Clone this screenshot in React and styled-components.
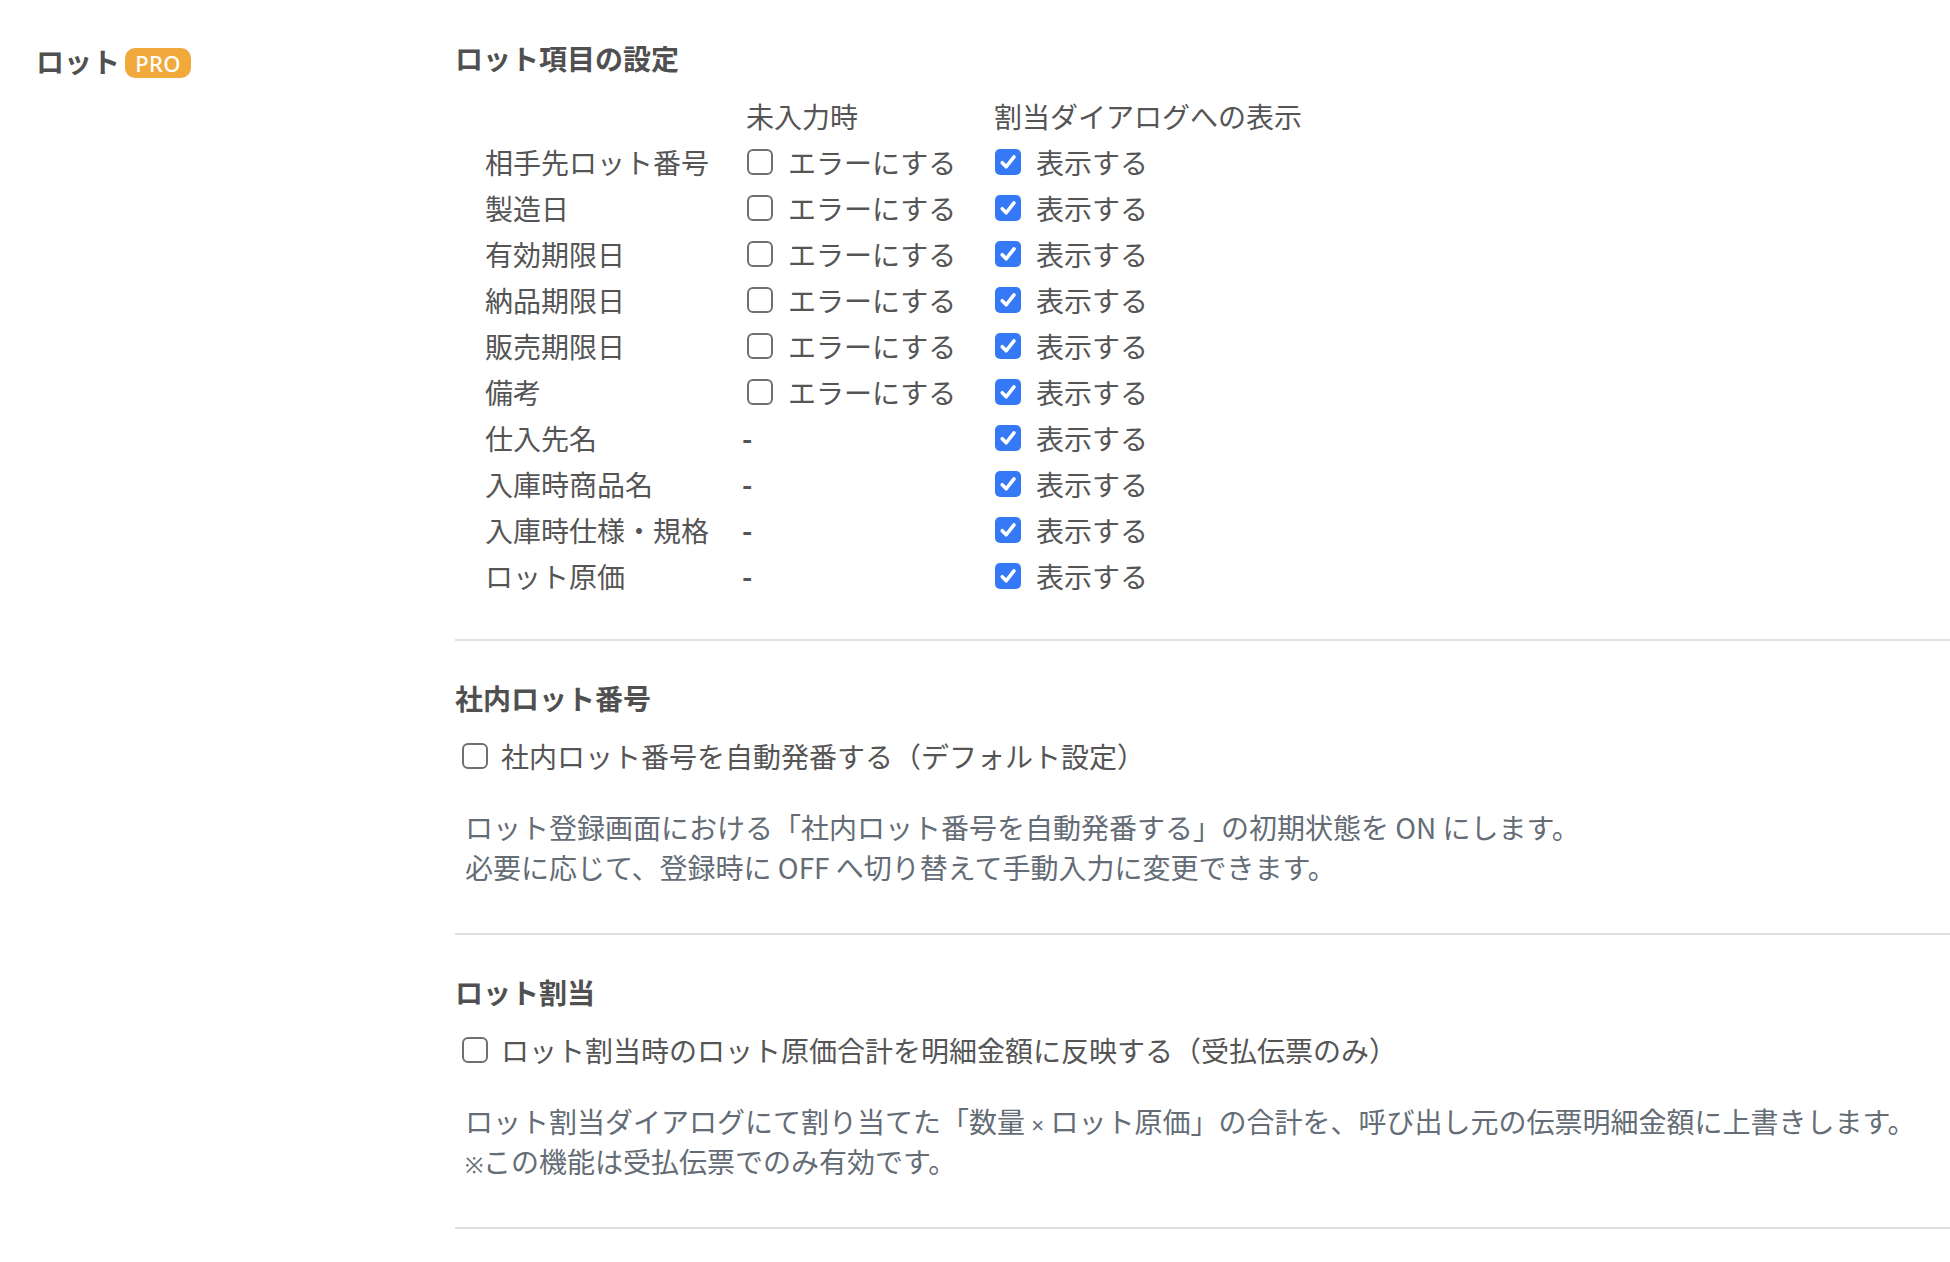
import React from "react";
import styled, { createGlobalStyle } from "styled-components";

const GlobalStyle = createGlobalStyle`
  html, body {
    margin: 0;
    padding: 0;
    background: #ffffff;
  }
  body {
    font-family: "Noto Sans CJK JP", "Noto Sans", sans-serif;
    color: #555555;
  }
`;

const Page = styled.div`
  display: grid;
  grid-template-columns: 455px 1fr;
  width: 1950px;
  min-height: 1262px;
  padding-top: 38px;
  box-sizing: border-box;
`;

const Sidebar = styled.aside`
  padding: 3px 0 0 36px;
`;

const SideTitle = styled.div`
  display: flex;
  align-items: center;
  gap: 5px;
  height: 40px;
  font-size: 28px;
  font-weight: 700;
  color: #505050;
  line-height: 40px;
`;

const ProBadge = styled.span`
  display: inline-flex;
  align-items: center;
  justify-content: center;
  width: 66px;
  height: 30px;
  margin-top: 3px;
  border-radius: 10px;
  background: #f2a93b;
  color: #ffffff;
  font-family: "Noto Sans", "Open Sans", sans-serif;
  font-size: 22px;
  font-weight: 500;
  line-height: 30px;
  letter-spacing: 0.3px;
`;

const Main = styled.main`
  display: flex;
  flex-direction: column;
`;

const Section = styled.section`
  padding: ${(p) => (p.$first ? "0" : "37px")} 0 ${(p) => p.$bottom}px 0;
  border-bottom: 2px solid #dcdfe3;
`;

const Heading = styled.h2`
  margin: 0;
  font-size: 28px;
  font-weight: 700;
  line-height: 40px;
  color: #505050;
`;

const Table = styled.div`
  display: grid;
  grid-template-columns: 261px 248px auto;
  grid-auto-rows: 46px;
  align-items: center;
  margin-top: 15px;
  padding-left: 30px;
  font-size: 28px;
  line-height: 46px;
  color: #555555;
`;

const Cell = styled.div`
  display: flex;
  align-items: center;
  white-space: nowrap;
`;

const Dash = styled.span`
  margin-left: -4px;
  font-weight: 700;
`;

const CheckLabel = styled.label`
  display: flex;
  align-items: center;
  gap: ${(p) => p.$gap || 15}px;
  padding-left: ${(p) => p.$indent || 0}px;
  margin-top: ${(p) => p.$top || 0}px;
  height: 46px;
  font-size: 28px;
  line-height: 46px;
  color: #555555;
  white-space: nowrap;
`;

const Box = styled.span`
  box-sizing: border-box;
  flex: none;
  display: inline-flex;
  align-items: center;
  justify-content: center;
  width: 26px;
  height: 26px;
  margin-left: 1px;
  border-radius: ${(p) => (p.$checked ? "5px" : "6px")};
  border: ${(p) => (p.$checked ? "none" : "2px solid #707070")};
  background: ${(p) => (p.$checked ? "#3579f6" : "#ffffff")};
`;

const Description = styled.p`
  margin: 28px 0 0 0;
  padding-left: 10px;
  font-size: 28px;
  line-height: 40px;
  color: #646c75;
  white-space: nowrap;
`;

const Small = styled.span`
  font-family: "Liberation Sans", Arial, sans-serif;
  font-size: 22px;
  line-height: 0;
`;

function Checkbox({ checked }) {
  return (
    <Box $checked={checked}>
      {checked && (
        <svg width="20" height="20" viewBox="0 0 19 19" aria-hidden="true">
          <path
            d="M4 10.2 L7.8 14 L15.2 4.6"
            fill="none"
            stroke="#ffffff"
            strokeWidth="3.4"
            strokeLinecap="round"
            strokeLinejoin="round"
          />
        </svg>
      )}
    </Box>
  );
}

const rows = [
  { name: "相手先ロット番号", error: true },
  { name: "製造日", error: true },
  { name: "有効期限日", error: true },
  { name: "納品期限日", error: true },
  { name: "販売期限日", error: true },
  { name: "備考", error: true },
  { name: "仕入先名", error: false },
  { name: "入庫時商品名", error: false },
  { name: "入庫時仕様・規格", error: false },
  { name: "ロット原価", error: false },
];

export default function App() {
  return (
    <>
      <GlobalStyle />
      <Page>
        <Sidebar>
          <SideTitle>
            ロット
            <ProBadge>PRO</ProBadge>
          </SideTitle>
        </Sidebar>
        <Main>
          <Section $first $bottom={40}>
            <Heading>ロット項目の設定</Heading>
            <Table>
              <Cell />
              <Cell>未入力時</Cell>
              <Cell>割当ダイアログへの表示</Cell>
              {rows.map((r) => (
                <React.Fragment key={r.name}>
                  <Cell>{r.name}</Cell>
                  <Cell>
                    {r.error ? (
                      <CheckLabel>
                        <Checkbox checked={false} />
                        エラーにする
                      </CheckLabel>
                    ) : (
                      <Dash>-</Dash>
                    )}
                  </Cell>
                  <Cell>
                    <CheckLabel>
                      <Checkbox checked />
                      表示する
                    </CheckLabel>
                  </Cell>
                </React.Fragment>
              ))}
            </Table>
          </Section>
          <Section $bottom={46}>
            <Heading>社内ロット番号</Heading>
            <CheckLabel $indent={6} $top={15} $gap={13}>
              <Checkbox checked={false} />
              社内ロット番号を自動発番する（デフォルト設定）
            </CheckLabel>
            <Description>
              ロット登録画面における「社内ロット番号を自動発番する」の初期状態を ON にします。
              <br />
              必要に応じて、登録時に OFF へ切り替えて手動入力に変更できます。
            </Description>
          </Section>
          <Section $bottom={46}>
            <Heading>ロット割当</Heading>
            <CheckLabel $indent={6} $top={15} $gap={13}>
              <Checkbox checked={false} />
              ロット割当時のロット原価合計を明細金額に反映する（受払伝票のみ）
            </CheckLabel>
            <Description>
              ロット割当ダイアログにて割り当てた「数量 <Small>×</Small> ロット原価」の合計を、呼び出し元の伝票明細金額に上書きします。
              <br />
              <Small>※</Small>この機能は受払伝票でのみ有効です。
            </Description>
          </Section>
        </Main>
      </Page>
    </>
  );
}
